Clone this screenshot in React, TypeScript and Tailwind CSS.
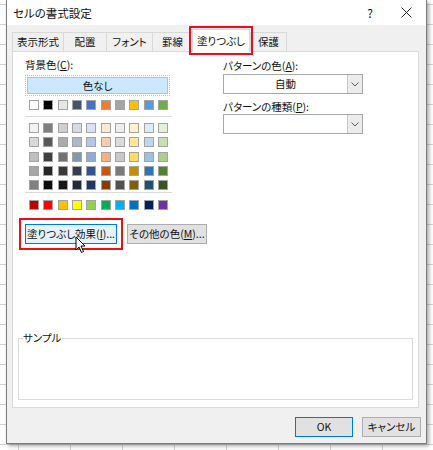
import React from 'react';

const themeTop = ['#FFFFFF', '#000000', '#E7E6E6', '#44546A', '#4472C4', '#ED7D31', '#A5A5A5', '#FFC000', '#5B9BD5', '#70AD47'];

const themeShades: string[][] = [
    ['#F2F2F2', '#7F7F7F', '#D0CECE', '#D6DCE4', '#D9E1F2', '#FCE4D6', '#EDEDED', '#FFF2CC', '#DDEBF7', '#E2EFDA'],
    ['#D9D9D9', '#595959', '#AEAAAA', '#ADB9CA', '#B4C6E7', '#F8CBAD', '#DBDBDB', '#FFE699', '#BDD7EE', '#C6E0B4'],
    ['#BFBFBF', '#404040', '#757171', '#8497B0', '#8EA9DB', '#F4B084', '#C9C9C9', '#FFD966', '#9BC2E6', '#A9D08E'],
    ['#A6A6A6', '#262626', '#3A3838', '#333F4F', '#305496', '#C65911', '#7B7B7B', '#BF8F00', '#2F75B5', '#548235'],
    ['#808080', '#0D0D0D', '#171616', '#222A35', '#203764', '#833C0B', '#525252', '#806000', '#1F4E78', '#375623'],
];

const standard = ['#C00000', '#FF0000', '#FFC000', '#FFFF00', '#92D050', '#00B050', '#00B0F0', '#0070C0', '#002060', '#7030A0'];

const tabs = [
    { label: '表示形式', w: 'w-[51px]' },
    { label: '配置', w: 'w-[43px]' },
    { label: 'フォント', w: 'w-[46px]' },
    { label: '罫線', w: 'w-[40px]' },
    { label: '塗りつぶし', w: 'w-[58px]', active: true },
    { label: '保護', w: 'w-[37px]' },
];

const SwatchRow = ({ colors }: { colors: string[] }) => (
    <div className="flex gap-x-[4.33px] ml-[4px]">
        {colors.map((c, i) => (
            <div key={i} className="w-[10px] h-[10px] border border-[#a3a3a3]" style={{ backgroundColor: c }} />
        ))}
    </div>
);

const Chevron = () => (
    <svg width="8" height="5" viewBox="0 0 8 5">
        <polyline points="0.5,0.5 4,4 7.5,0.5" fill="none" stroke="#5a5a5a" strokeWidth="1" />
    </svg>
);

const Dropdown = ({ value }: { value?: string }) => (
    <div className="flex h-[20px] w-[140px] border border-[#a9a9a9] bg-white">
        <div className="flex-1 flex items-center justify-center">{value}</div>
        <div className="w-[15px] border-l border-[#c8c8c8] bg-[#ececec] flex items-center justify-center">
            <Chevron />
        </div>
    </div>
);

export default function App() {
    return (
        <div className="relative w-[433px] h-[450px] overflow-hidden bg-white bg-[linear-gradient(to_right,#d4d4d4_1px,transparent_1px),linear-gradient(to_bottom,#d4d4d4_1px,transparent_1px)] bg-[size:52px_20px] bg-[position:18px_4px] font-['Noto_Sans_CJK_JP',sans-serif] text-[10.5px] leading-[14px] text-[#111] [font-feature-settings:'palt']">
            <div className="ml-[6px] w-[421px] h-[444px] flex flex-col border-x border-b border-[#7c7c7c] bg-[#f0f0f0] shadow-[2px_2px_4px_rgba(0,0,0,0.35)]">
                {/* title bar */}
                <div className="h-[25px] bg-white flex items-center pl-[6px] shrink-0">
                    <span className="text-[11.5px]">セルの書式設定</span>
                    <span className="ml-auto mr-[28px] text-[12px]">?</span>
                    <svg width="11" height="11" viewBox="0 0 11 11" className="mr-[14px]">
                        <path d="M0.5 0.5 L10.5 10.5 M10.5 0.5 L0.5 10.5" stroke="#222" strokeWidth="1" />
                    </svg>
                </div>

                <div className="flex-1 flex flex-col px-[5px]">
                    {/* tabs */}
                    <div className="h-[26px] flex items-end shrink-0">
                        {tabs.map((t) =>
                            t.active ? (
                                <div
                                    key={t.label}
                                    className={`${t.w} h-[23px] -mb-px relative z-10 bg-white border-x border-t border-[#d9d9d9] flex items-center justify-center outline-2 outline-offset-[1px] outline-[#e8111b]`}
                                >
                                    {t.label}
                                </div>
                            ) : (
                                <div
                                    key={t.label}
                                    className={`${t.w} h-[19px] bg-[#f0f0f0] border-t border-l border-[#d9d9d9] last:border-r flex items-center justify-center`}
                                >
                                    {t.label}
                                </div>
                            )
                        )}
                    </div>

                    {/* panel */}
                    <div className="w-[407px] h-[357px] bg-white border border-[#d9d9d9] flex flex-col shrink-0">
                        <div className="flex pl-[12px]">
                            <div className="w-[198px] flex flex-col">
                                <div className="mt-[6px] h-[14px]">背景色(<span className="underline">C</span>):</div>
                                <div className="mt-[5px] ml-[2px] w-[141px] h-[17px] bg-[#cce8ff] border border-[#99c9ef] flex items-center justify-center outline outline-1 outline-dotted outline-offset-[1px] outline-[#9ccbee]">
                                    色なし
                                </div>
                                <div className="mt-[6px]">
                                    <SwatchRow colors={themeTop} />
                                </div>
                                <div className="mt-[6px] w-[147px] h-px bg-[#dadada]" />
                                <div className="mt-[6px] flex flex-col gap-y-[4.33px]">
                                    {themeShades.map((row, i) => (
                                        <SwatchRow key={i} colors={row} />
                                    ))}
                                </div>
                                <div className="mt-[2px] w-[147px] h-px bg-[#dadada]" />
                                <div className="mt-[7px]">
                                    <SwatchRow colors={standard} />
                                </div>
                                <div className="mt-[14px] flex gap-[10px]">
                                    <div className="w-[92px] h-[20px] bg-[#e5f1fb] border border-[#0078d7] flex items-center justify-center outline-2 outline-offset-[4px] outline-[#e8111b]">
                                        塗りつぶし効果(<span className="underline">I</span>)...
                                    </div>
                                    <div className="w-[80px] h-[20px] bg-[#e1e1e1] border border-[#adadad] flex items-center justify-center">
                                        その他の色(<span className="underline">M</span>)...
                                    </div>
                                </div>
                            </div>
                            <div className="flex flex-col">
                                <div className="mt-[7px] h-[14px]">パターンの色(<span className="underline">A</span>):</div>
                                <div className="mt-px">
                                    <Dropdown value="自動" />
                                </div>
                                <div className="mt-[6px] h-[14px]">パターンの種類(<span className="underline">P</span>):</div>
                                <Dropdown />
                            </div>
                        </div>

                        {/* sample group */}
                        <div className="mt-auto mb-[7px] mx-[5px] h-[62px] border border-[#dcdcdc] relative">
                            <span className="absolute -top-[8px] left-[4px] bg-white pr-[1px]">サンプル</span>
                        </div>
                    </div>

                    {/* footer */}
                    <div className="flex justify-end gap-[9px] mt-[9px]">
                        <div className="w-[58px] h-[20px] bg-[#e1e1e1] border border-[#0078d7] flex items-center justify-center">OK</div>
                        <div className="w-[59px] h-[20px] bg-[#e1e1e1] border border-[#adadad] flex items-center justify-center">キャンセル</div>
                    </div>
                </div>
            </div>

            {/* mouse pointer */}
            <svg width="12" height="18" viewBox="0 0 12 18" className="absolute left-[75px] top-[236px]">
                <path d="M1 1 L1 14 L4 11 L6.5 16.5 L8.5 15.5 L6 10 L10 10 Z" fill="#fff" stroke="#000" strokeWidth="1" strokeLinejoin="round" />
            </svg>
        </div>
    );
}
